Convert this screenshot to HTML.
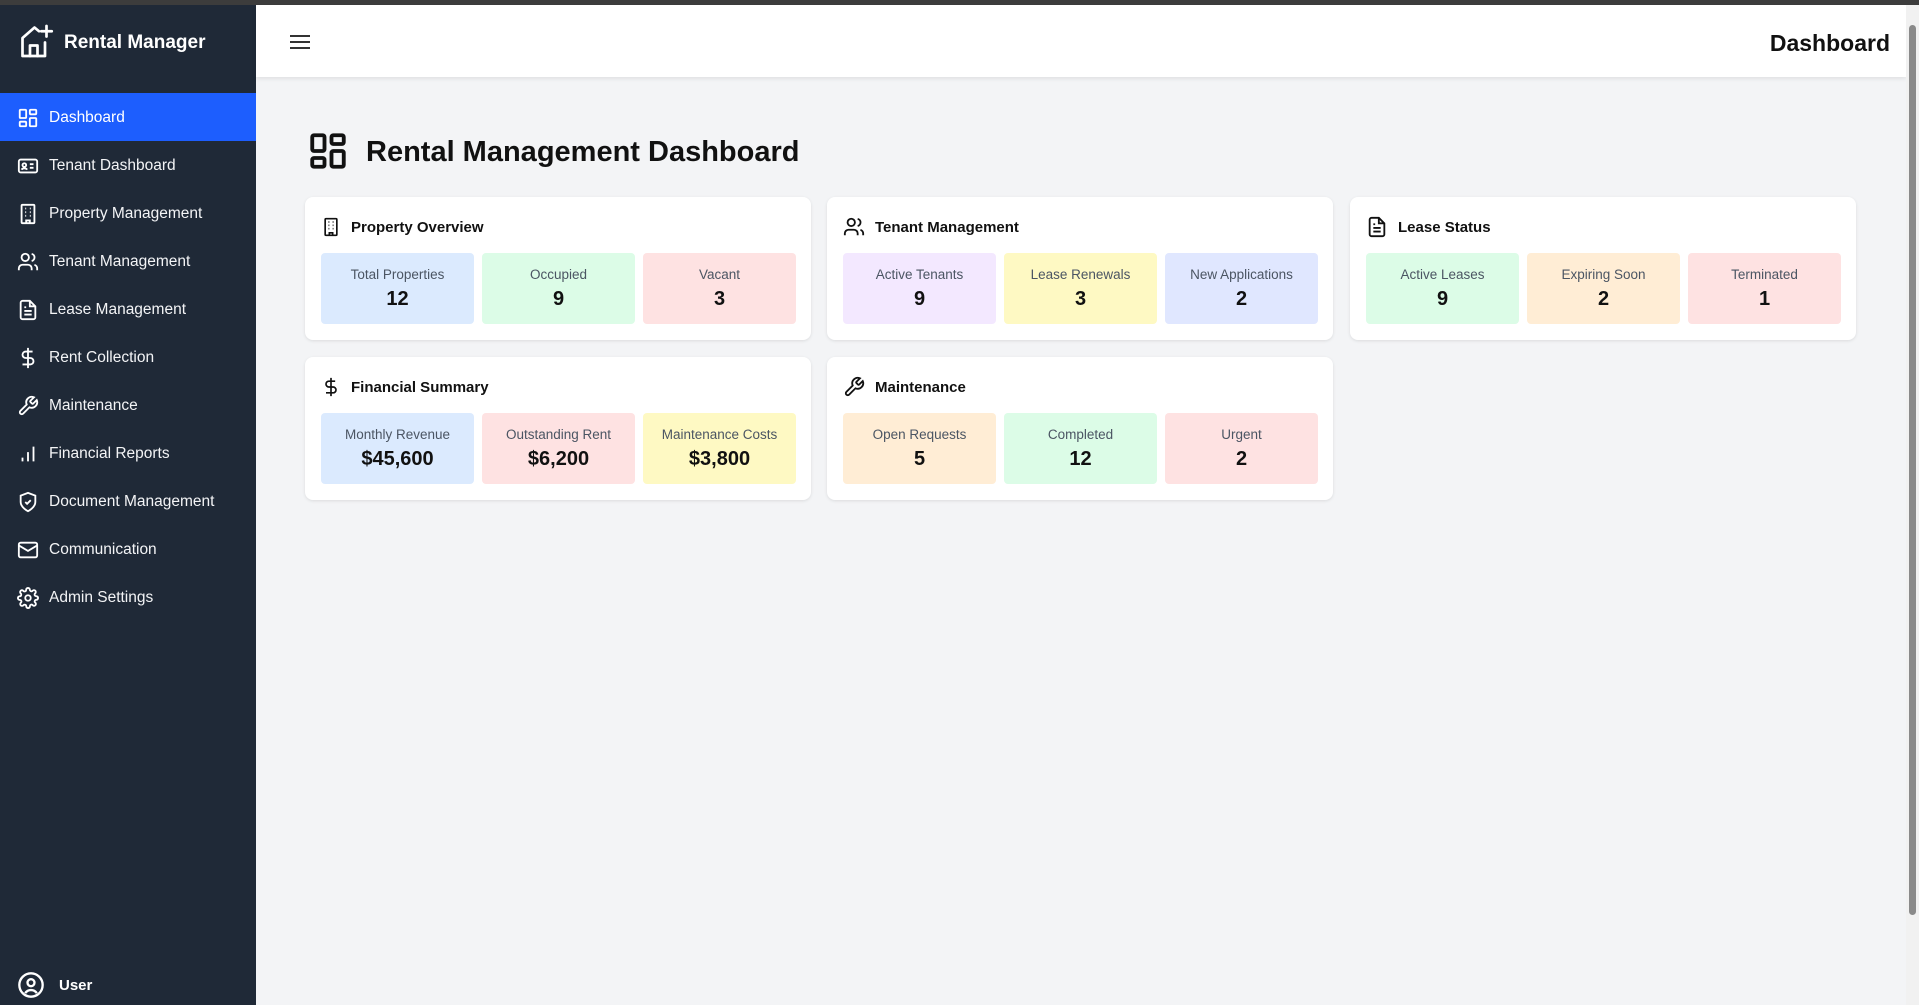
<!DOCTYPE html>
<html><head><meta charset="utf-8"><style>
*{box-sizing:border-box;margin:0;padding:0}
body{width:1919px;height:1005px;overflow:hidden;font-family:"Liberation Sans",sans-serif;background:#f3f4f6;position:relative}
.topbar{position:absolute;left:0;top:0;width:1919px;height:5px;background:#3c3c3c}
.side{position:absolute;left:0;top:5px;width:256px;height:1000px;background:#1f2937;color:#fff}
.logo{position:absolute;left:18px;top:17px;display:flex;align-items:center}
.logo span{font-weight:bold;font-size:19px;margin-left:10px;margin-top:4px}
.nav{position:absolute;top:88px;left:0;width:256px}
.item{height:48px;display:flex;align-items:center;padding-left:17px;font-size:15.5px;color:#f3f4f6;padding-top:2px}
.item svg{width:22px;height:22px;margin-right:10px;flex:none}
.item.active{background:#1d5efe;color:#fff}
.user{position:absolute;left:17px;bottom:2px;display:flex;align-items:center;font-weight:bold;font-size:15px;height:36px}
.user svg{margin-right:14px}
.header{position:absolute;left:256px;top:5px;width:1650px;height:72px;background:#fff;box-shadow:0 2px 4px rgba(0,0,0,.08)}
.ham{position:absolute;left:34px;top:29px}
.htitle{position:absolute;right:16px;top:25px;font-weight:bold;font-size:23px;color:#111}
.scroll{position:absolute;right:0;top:5px;width:13px;height:1000px;background:#f1f1f1}
.scroll div{position:absolute;left:3px;top:20px;width:7px;height:890px;background:#8a8a8a;border-radius:4px}
.title{position:absolute;left:307px;top:130px;display:flex;align-items:center}
.title span{font-weight:bold;font-size:29px;margin-left:17px;color:#111;margin-top:2px}
.card{position:absolute;width:506px;height:143px;background:#fff;border-radius:8px;box-shadow:0 1px 3px rgba(0,0,0,.1)}
.ch{position:absolute;left:16px;top:18px;height:24px;display:flex;align-items:center;font-size:15px;font-weight:bold;color:#111}
.ch svg{margin-right:10px}
.stats{position:absolute;left:16px;top:56px;display:flex;gap:8px}
.st{width:153px;height:71px;border-radius:4px;text-align:center}
.st .l{font-size:13.5px;color:#4b5563;margin-top:14px}
.st .v{font-size:20px;font-weight:bold;color:#111;margin-top:6px}
.b{background:#dbeafe}.g{background:#dcfce7}.r{background:#fee2e2}.p{background:#f3e8ff}.y{background:#fef9c3}.i{background:#e0e7ff}.o{background:#ffedd5}
</style></head><body>
<div class="topbar"></div>
<div class="side">
 <div class="logo"><svg width="36" height="38" viewBox="0 0 24 24" fill="none" stroke="#fff" stroke-width="1.8" stroke-linecap="round" stroke-linejoin="round"><path d="M14 5.5 11 3 3 10v12h15V13"/><path d="M8 22v-7h5v7"/><path d="M19 2v7M15.5 5.5h7"/></svg><span>Rental Manager</span></div>
 <div class="nav">
  <div class="item active"><svg viewBox="0 0 24 24" fill="none" stroke="#fff" stroke-width="2"><rect x="3" y="3" width="7" height="9" rx="1"/><rect x="14" y="3" width="7" height="5" rx="1"/><rect x="14" y="12" width="7" height="9" rx="1"/><rect x="3" y="16" width="7" height="5" rx="1"/></svg>Dashboard</div>
  <div class="item"><svg viewBox="0 0 24 24" fill="none" stroke="#fff" stroke-width="2"><rect x="2" y="5" width="20" height="14" rx="2"/><circle cx="8" cy="11" r="2"/><path d="M5 16c1-2 5-2 6 0M14 10h4M14 14h4"/></svg>Tenant Dashboard</div>
  <div class="item"><svg viewBox="0 0 24 24" fill="none" stroke="#fff" stroke-width="2"><rect x="5" y="2" width="14" height="20" rx="1"/><path d="M9 6h1M14 6h1M9 10h1M14 10h1M9 14h1M14 14h1M10 22v-3h4v3"/></svg>Property Management</div>
  <div class="item"><svg viewBox="0 0 24 24" fill="none" stroke="#fff" stroke-width="2"><circle cx="9" cy="7" r="4"/><path d="M2 21v-2a4 4 0 0 1 4-4h6a4 4 0 0 1 4 4v2M16 3.1a4 4 0 0 1 0 7.8M22 21v-2a4 4 0 0 0-3-3.9"/></svg>Tenant Management</div>
  <div class="item"><svg viewBox="0 0 24 24" fill="none" stroke="#fff" stroke-width="2"><path d="M14 2H6a2 2 0 0 0-2 2v16a2 2 0 0 0 2 2h12a2 2 0 0 0 2-2V8z"/><path d="M14 2v6h6M8 13h8M8 17h8M8 9h2"/></svg>Lease Management</div>
  <div class="item"><svg viewBox="0 0 24 24" fill="none" stroke="#fff" stroke-width="2"><path d="M12 1v22M17 5H9.5a3.5 3.5 0 0 0 0 7h5a3.5 3.5 0 0 1 0 7H6"/></svg>Rent Collection</div>
  <div class="item"><svg viewBox="0 0 24 24" fill="none" stroke="#fff" stroke-width="2"><path d="M14.7 6.3a1 1 0 0 0 0 1.4l1.6 1.6a1 1 0 0 0 1.4 0l3.8-3.8a6 6 0 0 1-7.9 7.9l-6.9 6.9a2.1 2.1 0 0 1-3-3l6.9-6.9a6 6 0 0 1 7.9-7.9z"/></svg>Maintenance</div>
  <div class="item"><svg viewBox="0 0 24 24" fill="none" stroke="#fff" stroke-width="2"><path d="M18 20V4M12 20V10M6 20v-4"/></svg>Financial Reports</div>
  <div class="item"><svg viewBox="0 0 24 24" fill="none" stroke="#fff" stroke-width="2"><path d="M12 22s8-4 8-10V5l-8-3-8 3v7c0 6 8 10 8 10z"/><path d="m9 12 2 2 4-4"/></svg>Document Management</div>
  <div class="item"><svg viewBox="0 0 24 24" fill="none" stroke="#fff" stroke-width="2"><rect x="2" y="4" width="20" height="16" rx="2"/><path d="m22 7-10 6L2 7"/></svg>Communication</div>
  <div class="item"><svg viewBox="0 0 24 24" fill="none" stroke="#fff" stroke-width="2"><circle cx="12" cy="12" r="3"/><path d="M19.4 15a1.7 1.7 0 0 0 .3 1.8l.1.1a2 2 0 1 1-2.8 2.8l-.1-.1a1.7 1.7 0 0 0-1.8-.3 1.7 1.7 0 0 0-1 1.5V21a2 2 0 1 1-4 0v-.1a1.7 1.7 0 0 0-1.1-1.5 1.7 1.7 0 0 0-1.8.3l-.1.1a2 2 0 1 1-2.8-2.8l.1-.1a1.7 1.7 0 0 0 .3-1.8 1.7 1.7 0 0 0-1.5-1H3a2 2 0 1 1 0-4h.1a1.7 1.7 0 0 0 1.5-1.1 1.7 1.7 0 0 0-.3-1.8l-.1-.1a2 2 0 1 1 2.8-2.8l.1.1a1.7 1.7 0 0 0 1.8.3H9a1.7 1.7 0 0 0 1-1.5V3a2 2 0 1 1 4 0v.1a1.7 1.7 0 0 0 1 1.5 1.7 1.7 0 0 0 1.8-.3l.1-.1a2 2 0 1 1 2.8 2.8l-.1.1a1.7 1.7 0 0 0-.3 1.8V9a1.7 1.7 0 0 0 1.5 1H21a2 2 0 1 1 0 4h-.1a1.7 1.7 0 0 0-1.5 1z"/></svg>Admin Settings</div>
 </div>
 <div class="user"><svg width="28" height="28" viewBox="0 0 24 24" fill="none" stroke="#fff" stroke-width="2"><circle cx="12" cy="12" r="10"/><circle cx="12" cy="10" r="3"/><path d="M7 19a6 6 0 0 1 10 0"/></svg>User</div>
</div>
<div class="header">
 <svg class="ham" width="20" height="16" viewBox="0 0 20 16" stroke="#333" stroke-width="2"><path d="M0 2h20M0 8h20M0 14h20"/></svg>
 <div class="htitle">Dashboard</div>
</div>
<div class="scroll"><div></div></div>
<div class="title"><svg width="42" height="42" viewBox="0 0 24 24" fill="none" stroke="#111" stroke-width="2.2"><rect x="3" y="3" width="7" height="9" rx="1"/><rect x="14" y="3" width="7" height="5" rx="1"/><rect x="14" y="12" width="7" height="9" rx="1"/><rect x="3" y="16" width="7" height="5" rx="1"/></svg><span>Rental Management Dashboard</span></div>

<div class="card" style="left:305px;top:197px"><div class="ch"><svg width="20" height="22" viewBox="0 0 24 24" fill="none" stroke="#111" stroke-width="2"><rect x="5" y="2" width="14" height="20" rx="1"/><path d="M9 6h1M14 6h1M9 10h1M14 10h1M9 14h1M14 14h1M10 22v-3h4v3"/></svg>Property Overview</div>
<div class="stats"><div class="st b"><div class="l">Total Properties</div><div class="v">12</div></div><div class="st g"><div class="l">Occupied</div><div class="v">9</div></div><div class="st r"><div class="l">Vacant</div><div class="v">3</div></div></div></div>

<div class="card" style="left:827px;top:197px"><div class="ch"><svg width="22" height="22" viewBox="0 0 24 24" fill="none" stroke="#111" stroke-width="2"><circle cx="9" cy="7" r="4"/><path d="M2 21v-2a4 4 0 0 1 4-4h6a4 4 0 0 1 4 4v2M16 3.1a4 4 0 0 1 0 7.8M22 21v-2a4 4 0 0 0-3-3.9"/></svg>Tenant Management</div>
<div class="stats"><div class="st p"><div class="l">Active Tenants</div><div class="v">9</div></div><div class="st y"><div class="l">Lease Renewals</div><div class="v">3</div></div><div class="st i"><div class="l">New Applications</div><div class="v">2</div></div></div></div>

<div class="card" style="left:1350px;top:197px"><div class="ch"><svg width="22" height="22" viewBox="0 0 24 24" fill="none" stroke="#111" stroke-width="2"><path d="M14 2H6a2 2 0 0 0-2 2v16a2 2 0 0 0 2 2h12a2 2 0 0 0 2-2V8z"/><path d="M14 2v6h6M8 13h8M8 17h8M8 9h2"/></svg>Lease Status</div>
<div class="stats"><div class="st g"><div class="l">Active Leases</div><div class="v">9</div></div><div class="st o"><div class="l">Expiring Soon</div><div class="v">2</div></div><div class="st r"><div class="l">Terminated</div><div class="v">1</div></div></div></div>

<div class="card" style="left:305px;top:357px"><div class="ch"><svg width="20" height="24" viewBox="0 0 24 24" fill="none" stroke="#111" stroke-width="2"><path d="M12 1v22M17 5H9.5a3.5 3.5 0 0 0 0 7h5a3.5 3.5 0 0 1 0 7H6"/></svg>Financial Summary</div>
<div class="stats"><div class="st b"><div class="l">Monthly Revenue</div><div class="v">$45,600</div></div><div class="st r"><div class="l">Outstanding Rent</div><div class="v">$6,200</div></div><div class="st y"><div class="l">Maintenance Costs</div><div class="v">$3,800</div></div></div></div>

<div class="card" style="left:827px;top:357px"><div class="ch"><svg width="22" height="22" viewBox="0 0 24 24" fill="none" stroke="#111" stroke-width="2"><path d="M14.7 6.3a1 1 0 0 0 0 1.4l1.6 1.6a1 1 0 0 0 1.4 0l3.8-3.8a6 6 0 0 1-7.9 7.9l-6.9 6.9a2.1 2.1 0 0 1-3-3l6.9-6.9a6 6 0 0 1 7.9-7.9z"/></svg>Maintenance</div>
<div class="stats"><div class="st o"><div class="l">Open Requests</div><div class="v">5</div></div><div class="st g"><div class="l">Completed</div><div class="v">12</div></div><div class="st r"><div class="l">Urgent</div><div class="v">2</div></div></div></div>
</body></html>
